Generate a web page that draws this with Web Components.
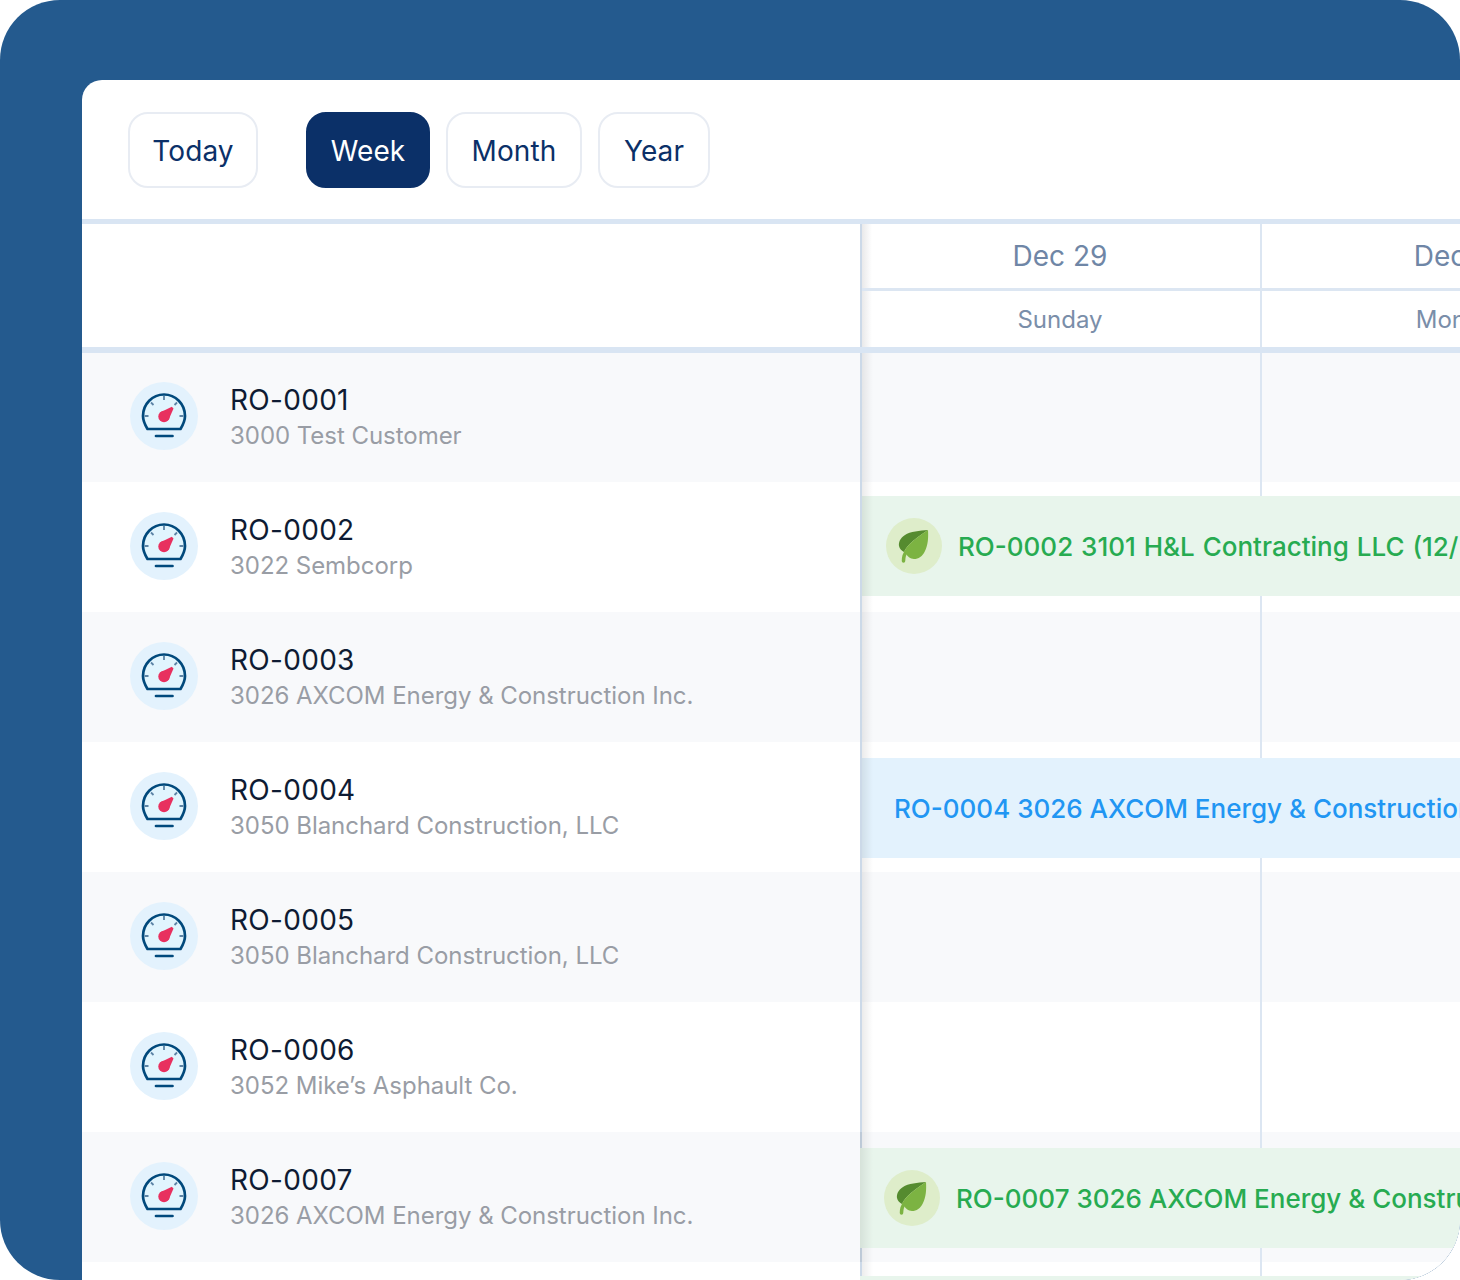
<!DOCTYPE html>
<html lang="en"><head><meta charset="utf-8"><title>Schedule</title>
<style>
html,body{margin:0;padding:0;background:#fff}
body{font-family:Inter,"Liberation Sans",sans-serif}
</style></head><body>
<app-frame>
  <view-toolbar></view-toolbar>
  <gantt-header></gantt-header>
  <gantt-row alt code="RO-0001" customer="3000 Test Customer"></gantt-row>
  <gantt-row code="RO-0002" customer="3022 Sembcorp" event="RO-0002 3101 H&amp;L Contracting LLC (12/" kind="green" top="14" ix="24" ws="1"></gantt-row>
  <gantt-row alt code="RO-0003" customer="3026 AXCOM Energy &amp; Construction Inc."></gantt-row>
  <gantt-row code="RO-0004" customer="3050 Blanchard Construction, LLC" event="RO-0004 3026 AXCOM Energy &amp; Construction" kind="blue" top="16"></gantt-row>
  <gantt-row alt code="RO-0005" customer="3050 Blanchard Construction, LLC"></gantt-row>
  <gantt-row code="RO-0006" customer="3052 Mike’s Asphault Co."></gantt-row>
  <gantt-row alt code="RO-0007" customer="3026 AXCOM Energy &amp; Construction Inc." event="RO-0007 3026 AXCOM Energy &amp; Construction" kind="green" top="16" ix="24" bleed></gantt-row>
  <gantt-tail></gantt-tail>
</app-frame>
<script>
const define=(name,html,init)=>customElements.define(name,class extends HTMLElement{
  connectedCallback(){ if(this.shadowRoot) return; const r=this.attachShadow({mode:'open'}); r.innerHTML=html; init&&init(this,r); }
});
define('app-frame',`<style>
:host{display:block;width:1460px;height:1280px;box-sizing:border-box;padding:80px 0 0 82px;background:#245a8e;border-radius:60px;overflow:hidden}
.card{height:1200px;background:#fff;border-radius:20px 0 60px 0;overflow:hidden}
</style><div class="card"><slot></slot></div>`);

define('view-button',`<style>
:host{display:block}
.b{box-sizing:border-box;height:76px;display:flex;align-items:center;justify-content:center;padding:1px 0 0;border:2px solid #e8ecf3;border-radius:20px;color:#0b3068;font-size:28px;line-height:34px;background:#fff;letter-spacing:.1px}
:host([active]) .b{background:#0b3068;border-color:#0b3068;color:#fff}
</style><div class="b"><slot></slot></div>`,(h,r)=>{r.querySelector('.b').style.width=h.getAttribute('w')+'px'});

define('view-toolbar',`<style>
:host{display:flex;box-sizing:border-box;height:139px;padding:32px 46px 0;gap:16px}
.gap{width:16px}
</style><view-button w="130">Today</view-button><span class="gap"></span><view-button w="124" active>Week</view-button><view-button w="136">Month</view-button><view-button w="112">Year</view-button>`);

define('gantt-header',`<style>
:host{display:flex;height:134px;margin-bottom:-1px;position:relative;z-index:3;box-sizing:border-box;border-top:5px solid #d9e5f3;border-bottom:6px solid #d9e5f3;background:#fff}
.left{width:778px;flex:none;border-right:2px solid #ccd9e8}
.right{flex:1;display:flex;min-width:0;overflow:hidden;background:linear-gradient(90deg,#e9e9ea,#fff 10px)}
.day{flex:none;width:398px;border-right:2px solid #dce6f2;display:flex;flex-direction:column;color:#6f86a6}
.d{height:64px;border-bottom:3px solid #dce6f2;display:flex;align-items:center;justify-content:center;font-size:28px;white-space:nowrap;padding-right:2px}
.w{flex:1;display:flex;align-items:center;justify-content:center;font-size:24px;color:#7a8ea9;white-space:nowrap;padding-right:2px}
.next .d,.next .w{padding-left:3px}
</style><div class="left"></div><div class="right">
<div class="day"><div class="d">Dec 29</div><div class="w">Sunday</div></div>
<div class="day next"><div class="d">Dec 30</div><div class="w">Monday</div></div></div>`);

define('leaf-icon',`<style>
:host{display:block;width:56px;height:56px;flex:none;border-radius:50%;background:#deedca}
svg{display:block;width:56px;height:56px}
</style><svg viewBox="0 0 56 56" aria-hidden="true">
<path d="M17.500 43C17.500 39 18 36 21 33" fill="none" stroke="#7cb342" stroke-width="3.500" stroke-linecap="round"/>
<path d="M42 12C34 12.500 24 13.500 19 17C14 20 12.500 24.500 13 28C13.500 31 16 33 18 34C21 27 31 19 42 12Z" fill="#558b2f"/>
<path d="M42 12C42.500 20 42 27 39 33C36.500 38.500 32.500 41 28 41C24.500 41 21 38 19.500 35L18 34C21 27 31 19 42 12Z" fill="#7cb342"/>
</svg>`);

define('gauge-icon',`<style>
:host{display:block;width:68px;height:68px;flex:none;border-radius:50%;background:#e3f2fd}
svg{display:block;width:68px;height:68px}
</style><svg viewBox="0 0 68 68" aria-hidden="true">
<path d="M17.500 47C14.500 42 13 38 13 34C13 22 22.500 12.500 34 12.500C45.500 12.500 55 22 55 34C55 38 53.500 42 50.500 47Z" fill="#e1f5fe" stroke="#01497c" stroke-width="2.700" stroke-linejoin="round"/>
<path d="M26 54H42.500" stroke="#01497c" stroke-width="2.700" stroke-linecap="round"/>
<path d="M34 14V18M21 20.500L23.500 23M47 20.500L44.500 23M14.500 34H18.500M53.500 34H49.500" stroke="#5d84a6" stroke-width="1.800"/>
<circle cx="34" cy="34.500" r="5.700" fill="#e8305f"/>
<path d="M41.800 24.800L43.500 26.500L38.500 38L30 30.500Z" fill="#e8305f"/>
</svg>`);

define('time-event',`<style>
:host{display:flex;align-items:center;height:100px;box-sizing:border-box;white-space:nowrap;overflow:hidden;font-size:26px;font-weight:500;line-height:34px;padding-top:1px}
:host([kind=green]){background:#e8f5ec;color:#27ab51}
:host([kind=blue]){background:#e3f2fd;color:#2196f3;padding-left:32px}
::slotted(leaf-icon){margin-right:16px;margin-top:-1px}
</style><slot name="icon"></slot><slot></slot>`);

define('gantt-row',`<style>
:host{display:flex;height:130px;background:#fff}
:host([alt]){background:#f8f9fb}
.left{box-sizing:border-box;width:780px;flex:none;display:flex;align-items:center;gap:32px;padding:0 0 2px 48px;border-right:2px solid #ccd9e8}
.t{display:flex;flex-direction:column;white-space:nowrap;margin-top:3px}
.c{font-size:28px;line-height:36px;color:#0e1b33;letter-spacing:.3px}
.s{font-size:24px;line-height:36px;color:#999da5;letter-spacing:-.04px}
.right{flex:1;min-width:0;position:relative;display:block}
.line{position:absolute;left:398px;top:0;bottom:0;width:2px;background:#dce6f2}
.sh{position:absolute;left:0;top:0;bottom:0;width:11px;background:linear-gradient(90deg,rgba(0,0,0,.08),rgba(0,0,0,0));z-index:2}
.ev{position:absolute;left:0;right:0}
</style><div class="left"><gauge-icon></gauge-icon><div class="t"><div class="c"></div><div class="s"></div></div></div>
<div class="right"><div class="line"></div><div class="sh"></div></div>`,(h,r)=>{
  r.querySelector('.c').textContent=h.getAttribute('code');
  r.querySelector('.s').textContent=h.getAttribute('customer');
  const ev=h.getAttribute('event');
  if(ev){
    const e=document.createElement('time-event');
    e.setAttribute('kind',h.getAttribute('kind'));
    e.className='ev';
    e.style.top=h.getAttribute('top')+'px';
    if(h.hasAttribute('ws')) e.style.wordSpacing=h.getAttribute('ws')+'px';
    if(h.hasAttribute('bleed')){
      e.style.left='-2px';
      const sh=r.querySelector('.sh');sh.style.left='-2px';sh.style.width='13px';
    }
    if(h.hasAttribute('ix')){
      e.style.paddingLeft=h.getAttribute('ix')+'px';
      const i=document.createElement('leaf-icon');i.slot='icon';e.appendChild(i);
    }
    e.appendChild(document.createTextNode(ev));
    r.querySelector('.right').appendChild(e);
  }
});

define('gantt-tail',`<style>
:host{display:flex;height:18px;background:#fff}
.left{width:780px;flex:none;box-sizing:border-box;border-right:2px solid #ccd9e8}
.right{flex:1;position:relative;background:linear-gradient(90deg,rgba(0,0,0,.07),rgba(0,0,0,0) 11px)}
.line{position:absolute;left:398px;top:0;bottom:0;width:2px;background:#dce6f2}
.g{position:absolute;left:-2px;right:0;top:14px;height:4px;background:#e8f5ec}
</style><div class="left"></div><div class="right"><div class="line"></div><div class="g"></div></div>`);
</script></body></html>
